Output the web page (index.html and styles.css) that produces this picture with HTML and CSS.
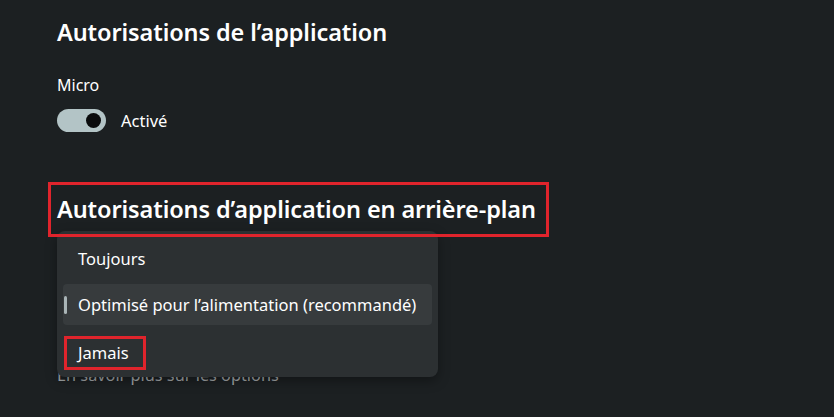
FILE: index.html
```html
<!DOCTYPE html>
<html lang="fr">
<head>
<meta charset="utf-8">
<title>Autorisations de l’application</title>
<link rel="stylesheet" href="styles.css">
</head>
<body>
<main class="page">
  <h1 class="title">Autorisations de l’application</h1>
  <div class="label">Micro</div>
  <div class="toggle-row">
    <span class="toggle"><span class="thumb"></span></span>
    <span class="toggle-text">Activé</span>
  </div>
  <div class="bg-section">
    <div class="highlight">
      <h2 class="title">Autorisations d’application en arrière-plan</h2>
    </div>
    <a class="learn">En savoir plus sur les options</a>
    <ul class="menu">
      <li class="item">Toujours</li>
      <li class="item selected"><span class="bar"></span>Optimisé pour l’alimentation (recommandé)</li>
      <li class="item"><span class="mark">Jamais</span></li>
    </ul>
  </div>
</main>
</body>
</html>
```
FILE: styles.css
```css
html, body {
  margin: 0;
  padding: 0;
  height: 100%;
}
body {
  background: #1c2022;
  color: #ffffff;
  font-family: "Noto Sans", "Open Sans", sans-serif;
  overflow: hidden;
}
.page {
  padding: 17px 0 0 57px;
}
.title {
  margin: 0;
  font-size: 23.5px;
  line-height: 31px;
  font-weight: 600;
  letter-spacing: -0.1px;
}
.label {
  margin-top: 27px;
  font-size: 16px;
  line-height: 21px;
}
.toggle-row {
  margin-top: 12px;
  display: flex;
  align-items: center;
  gap: 15px;
  height: 24px;
}
.toggle {
  width: 49px;
  height: 23px;
  border-radius: 12px;
  background: #b3c4c6;
  display: flex;
  align-items: center;
  justify-content: flex-end;
  padding-right: 5px;
  box-sizing: border-box;
}
.thumb {
  width: 15px;
  height: 15px;
  border-radius: 50%;
  background: #0a0b0c;
}
.toggle-text {
  font-size: 16.5px;
  line-height: 21px;
}
.bg-section {
  position: relative;
  margin-top: 50px;
  margin-left: -9px;
}
.highlight {
  position: relative;
  z-index: 2;
  width: 489px;
  height: 49px;
  border: 3px solid #e0242c;
  padding: 0 0 0 6px;
  display: flex;
  align-items: center;
}
.learn {
  display: block;
  margin: 128px 0 0 9px;
  font-size: 16.3px;
  line-height: 21px;
  color: #a3a7a9;
}
.menu {
  position: absolute;
  z-index: 1;
  left: 9px;
  top: 49px;
  width: 381px;
  margin: 0;
  padding: 7px 6px 1px;
  box-sizing: border-box;
  list-style: none;
  background: #2c3032;
  border-radius: 8px;
  box-shadow: 0 4px 12px rgba(0, 0, 0, 0.35);
}
.item {
  position: relative;
  height: 41px;
  margin-bottom: 5px;
  display: flex;
  align-items: center;
  padding-left: 15px;
  font-size: 16.5px;
  border-radius: 4px;
}
.item.selected {
  background: #373b3d;
}
.bar {
  position: absolute;
  left: 1px;
  top: 12px;
  width: 3px;
  height: 18px;
  border-radius: 2px;
  background: #a9b4b6;
}
.mark {
  display: inline-flex;
  align-items: center;
  box-sizing: border-box;
  width: 82px;
  height: 34px;
  margin: 4px 0 0 -14px;
  padding: 0 0 0 11px;
  border: 3px solid #e0242c;
}
```
